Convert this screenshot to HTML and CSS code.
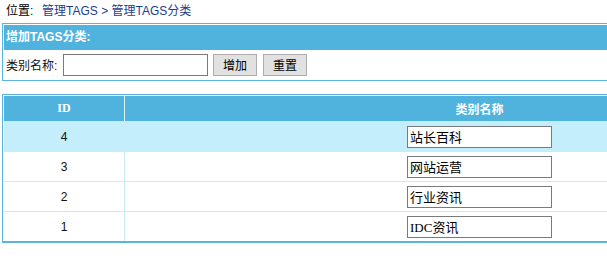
FILE: index.html
```html
<!DOCTYPE html>
<html lang="zh-CN">
<head>
<meta charset="utf-8">
<title>管理TAGS分类</title>
<link rel="stylesheet" href="styles.css">
</head>
<body>
<div class="crumb"><span class="crumb-label">位置:</span><a href="#">管理TAGS</a> <span class="sep">&gt;</span> <a href="#">管理TAGS分类</a></div>

<div class="box">
  <div class="box-head">增加TAGS分类:</div>
  <form class="box-row">
    <label class="lbl">类别名称:</label>
    <input class="txt" type="text">
    <button class="btn btn-add" type="button">增加</button>
    <button class="btn btn-reset" type="reset">重置</button>
  </form>
</div>

<table class="list">
  <thead>
    <tr><th class="c-id">ID</th><th class="c-name">类别名称</th></tr>
  </thead>
  <tbody>
    <tr class="hl"><td class="c-id">4</td><td class="c-name"><input class="txt cell-txt" type="text" value="站长百科"></td></tr>
    <tr><td class="c-id">3</td><td class="c-name"><input class="txt cell-txt" type="text" value="网站运营"></td></tr>
    <tr><td class="c-id">2</td><td class="c-name"><input class="txt cell-txt" type="text" value="行业资讯"></td></tr>
    <tr><td class="c-id">1</td><td class="c-name"><input class="txt cell-txt" type="text" value="IDC资讯"></td></tr>
  </tbody>
</table>
</body>
</html>
```

FILE: styles.css
```css
html, body {
  margin: 0;
  padding: 0;
  overflow: hidden;
  background: #fff;
}
body {
  font: 12px "Liberation Sans", "Noto Sans CJK SC", sans-serif;
  color: #111;
}
.crumb {
  height: 23px;
  line-height: 23px;
  padding-left: 6px;
  white-space: nowrap;
  color: #000;
}
.crumb-label {
  display: inline-block;
  width: 36px;
}
.crumb a, .crumb .sep {
  color: #1c3d8c;
  text-decoration: none;
}
.box {
  margin-left: 2px;
  width: 1000px;
  border: 1px solid #5ab4e0;
  padding: 1px;
}
.box-head {
  height: 25px;
  line-height: 25px;
  background: #4fb3de;
  color: #fff;
  font-weight: bold;
  padding-left: 2px;
}
.box-row {
  margin: 0;
  height: 29px;
  display: flex;
  align-items: center;
  padding-left: 2px;
}
.lbl {
  width: 57px;
}
.txt {
  box-sizing: border-box;
  width: 145px;
  height: 22px;
  border: 1px solid #7a7a7a;
  padding: 0 2px;
  margin: 0;
  font: 13px "Liberation Serif", "Noto Sans CJK SC", serif;
  color: #000;
  background: #fff;
}
.btn {
  box-sizing: border-box;
  width: 44px;
  height: 22px;
  margin: 0;
  padding: 0;
  border: 1px solid #adadad;
  background: #e1e1e1;
  font: 12px "Liberation Sans", "Noto Sans CJK SC", sans-serif;
  color: #000;
}
.btn-add { margin-left: 5px; }
.btn-reset { margin-left: 6px; }

.list {
  margin: 13px 0 0 2px;
  width: 834px;
  border: 1px solid #5ab4e0;
  border-bottom-width: 2px;
  padding: 1px 1px 0 1px;
  border-collapse: separate;
  border-spacing: 0;
  table-layout: fixed;
}
.list th {
  height: 25px;
  padding: 0;
  background: #4fb3de;
  color: #fff;
  font: bold 12px "Liberation Serif", "Noto Sans CJK SC", serif;
  text-align: center;
}
.list th.c-id {
  width: 120px;
  border-right: 1px solid #dcf2fb;
}
.list td {
  height: 29px;
  padding: 0;
  border-top: 1px solid #c6ecf8;
  text-align: center;
  font: 12px "Liberation Sans", "Noto Sans CJK SC", sans-serif;
  color: #111;
}
.list td.c-id {
  border-right: 1px solid #c6ecf8;
}
.list tr.hl td {
  background: #c4eefc;
}
.cell-txt {
  vertical-align: middle;
}
```
